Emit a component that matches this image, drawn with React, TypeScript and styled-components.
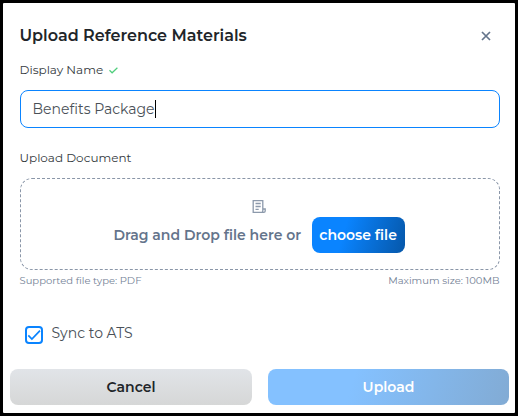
import * as React from 'react'
import styled, { createGlobalStyle } from 'styled-components'

const GlobalStyle = createGlobalStyle`
  * {
    box-sizing: border-box;
  }
  body {
    margin: 0;
    background: #000;
    font-family: Montserrat, Inter, 'Open Sans', sans-serif;
    color: #212529;
  }
  button {
    font-family: inherit;
    border: 0;
    padding: 0;
    cursor: pointer;
  }
`

const Backdrop = styled.div`
  width: 518px;
  height: 416px;
  padding: 3px;
  background: #000;
`

const Modal = styled.div`
  height: 410px;
  display: flex;
  flex-direction: column;
  background: #fff;
  border-radius: 1px;
`

const Header = styled.header`
  display: flex;
  align-items: center;
  justify-content: space-between;
  height: 24px;
  margin: 21px 23px 0 16.5px;
`

const Title = styled.h1`
  margin: 0;
  font-size: 16px;
  line-height: 24px;
  font-weight: 600;
  white-space: nowrap;
`

const CloseButton = styled.button`
  display: flex;
  width: 12px;
  height: 12px;
  background: none;
`

const Body = styled.div`
  flex: 1;
  padding: 13px 15px 0 17px;
`

const Label = styled.label`
  display: flex;
  align-items: center;
  gap: 6px;
  height: 18px;
  margin-left: -0.5px;
  font-size: 12px;
  line-height: 18px;
  color: #343a40;
  white-space: nowrap;
`

const TextField = styled.div`
  display: flex;
  align-items: center;
  height: 38px;
  margin: 11px 0 21px;
  padding: 0 11.5px;
  border: 1px solid #0a84ff;
  border-radius: 8px;
  font-size: 14px;
  color: #495057;
`

const Caret = styled.span`
  width: 1px;
  height: 18px;
  background: #000;
`

const DropZone = styled.div`
  display: flex;
  flex-direction: column;
  align-items: center;
  height: 92px;
  margin-top: 11px;
  padding: 20px 2px 0 0;
  border: 1px dashed #8a96a8;
  border-radius: 12px;
`

const DropRow = styled.div`
  display: flex;
  align-items: center;
  gap: 10.5px;
  height: 36px;
  margin-top: 3px;
`

const DropText = styled.span`
  font-size: 14px;
  font-weight: 600;
  color: #64748b;
  white-space: nowrap;
`

const ChooseButton = styled.button`
  width: 93px;
  height: 36px;
  border-radius: 8px;
  background: linear-gradient(107deg, #0a84ff 35%, #0657a9 100%);
  color: #fff;
  font-size: 14px;
  font-weight: 600;
  white-space: nowrap;
`

const Hints = styled.div`
  display: flex;
  justify-content: space-between;
  height: 14px;
  margin: 4px 0.5px 0 -0.5px;
  font-size: 10px;
  line-height: 14px;
  color: #748296;
`

const CheckRow = styled.label`
  display: flex;
  margin: 36px 0 0 5px;
  height: 22px;
  gap: 8.5px;
`

const CheckBox = styled.span`
  display: flex;
  width: 18px;
  height: 18px;
  margin-top: 2px;
  border: 2px solid #0a84ff;
  border-radius: 4px;
`

const CheckText = styled.span`
  font-size: 14px;
  line-height: 18px;
  color: #495057;
`

const Footer = styled.footer`
  display: grid;
  grid-template-columns: 242px 241px;
  gap: 16px;
  padding: 0 0 8px 7px;
`

const FooterButton = styled.button<{ $primary?: boolean }>`
  height: 36px;
  border-radius: 8px;
  background: ${(p) =>
    p.$primary
      ? 'linear-gradient(107deg, #84c1ff 35%, #82abd4 100%)'
      : 'linear-gradient(180deg, #e1e4e8, #d6d7d7)'};
  color: ${(p) => (p.$primary ? '#fff' : '#212529')};
  font-size: 14px;
  font-weight: 600;
`

const CloseIcon = () => (
  <svg width="12" height="12" viewBox="0 0 12 12" fill="none" stroke="#64748b" strokeWidth="1.7">
    <path d="M2 2l8 8M10 2l-8 8" />
  </svg>
)

const ValidIcon = () => (
  <svg width="9" height="7" viewBox="0 0 9 7" fill="none" stroke="#4fce7c" strokeWidth="1.2">
    <path d="M0.5 3.3l2.6 2.5L8.4 0.8" />
  </svg>
)

const DocumentIcon = () => (
  <svg width="15" height="15" viewBox="0 0 15 15" fill="none" stroke="#8c99ab" strokeWidth="1.3">
    <path d="M10.8 10V1.7H1.2v11.6h10.6a1.4 1.4 0 0 0 1.4-1.4V10h-2.4v1.9a1.4 1.4 0 0 1-1.4 1.4" />
    <path d="M3.5 4.5h5.2M3.5 7.5h5.2M3.5 10.4h3.2" />
  </svg>
)

const TickIcon = () => (
  <svg width="14" height="14" viewBox="0 0 14 14" fill="none" stroke="#0a84ff" strokeWidth="1.7">
    <path d="M1.3 7.3l3.6 3.8L13 2.6" />
  </svg>
)

const App: React.FC = () => (
  <>
    <GlobalStyle />
    <Backdrop>
      <Modal role="dialog">
        <Header>
          <Title>Upload Reference Materials</Title>
          <CloseButton aria-label="Close">
            <CloseIcon />
          </CloseButton>
        </Header>
        <Body>
          <Label>
            Display Name
            <ValidIcon />
          </Label>
          <TextField>
            Benefits Package
            <Caret />
          </TextField>
          <Label>Upload Document</Label>
          <DropZone>
            <DocumentIcon />
            <DropRow>
              <DropText>Drag and Drop file here or</DropText>
              <ChooseButton>choose file</ChooseButton>
            </DropRow>
          </DropZone>
          <Hints>
            <span>Supported file type: PDF</span>
            <span>Maximum size: 100MB</span>
          </Hints>
          <CheckRow>
            <CheckBox>
              <TickIcon />
            </CheckBox>
            <CheckText>Sync to ATS</CheckText>
          </CheckRow>
        </Body>
        <Footer>
          <FooterButton>Cancel</FooterButton>
          <FooterButton $primary>Upload</FooterButton>
        </Footer>
      </Modal>
    </Backdrop>
  </>
)

export default App
